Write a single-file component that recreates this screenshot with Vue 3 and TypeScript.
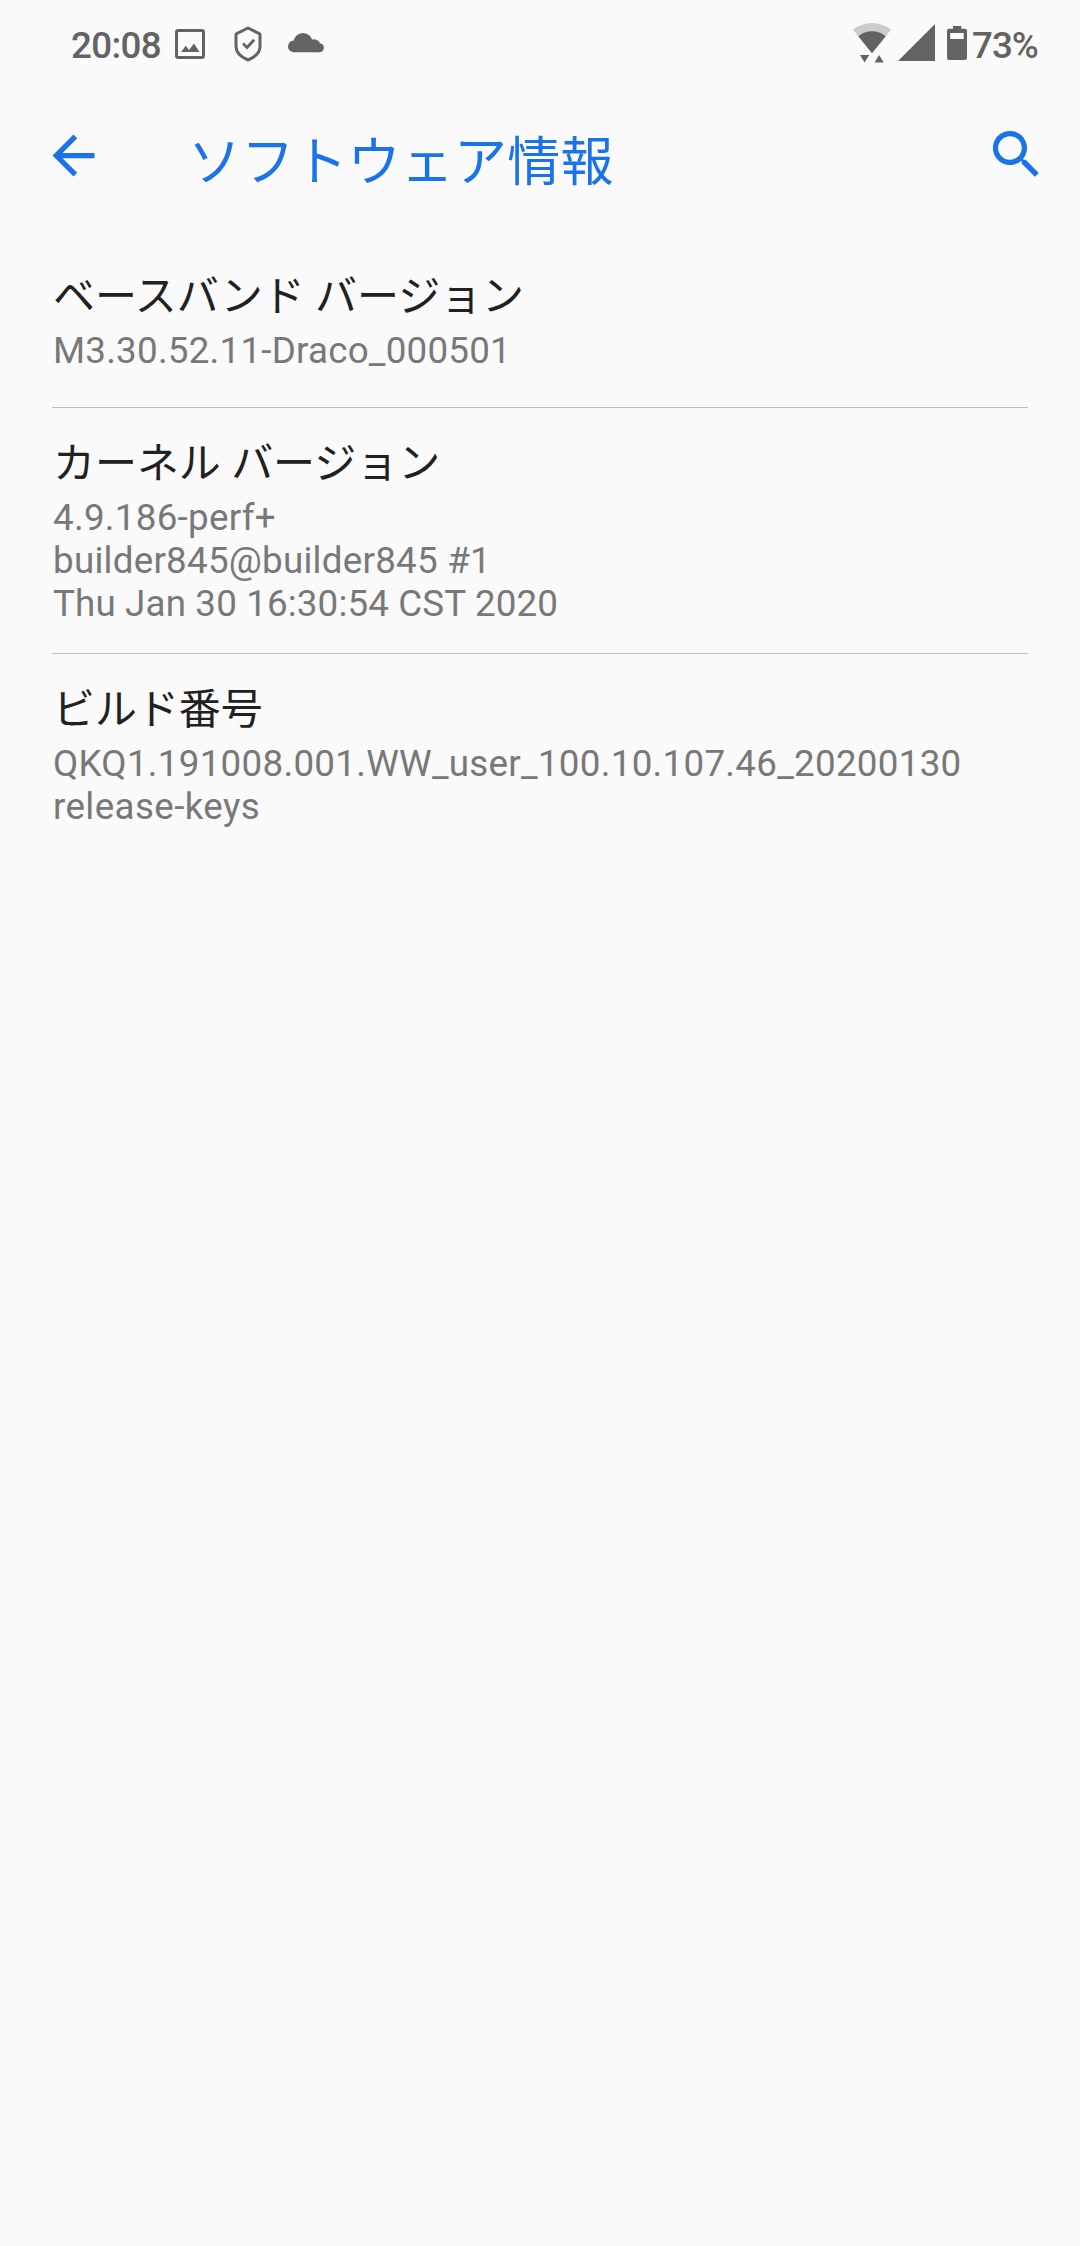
<script setup lang="ts">
interface InfoLine {
  text: string
  tracking: number
}

interface InfoRow {
  title: string
  lines: InfoLine[]
}

const rows: InfoRow[] = [
  {
    title: 'ベースバンド バージョン',
    lines: [{ text: 'M3.30.52.11-Draco_000501', tracking: 0.23 }],
  },
  {
    title: 'カーネル バージョン',
    lines: [
      { text: '4.9.186-perf+', tracking: 0.28 },
      { text: 'builder845@builder845 #1', tracking: 0.24 },
      { text: 'Thu Jan 30 16:30:54 CST 2020', tracking: 0.14 },
    ],
  },
  {
    title: 'ビルド番号',
    lines: [
      { text: 'QKQ1.191008.001.WW_user_100.10.107.46_20200130', tracking: 0.28 },
      { text: 'release-keys', tracking: 0.38 },
    ],
  },
]
</script>

<template>
  <div class="screen">
    <div class="status">
      <span class="clock">20:08</span>
      <svg class="photo" width="30" height="30" viewBox="0 0 30 30">
        <rect x="1.5" y="1.5" width="27" height="27" rx="1.8" fill="none" stroke="currentColor" stroke-width="3" />
        <path fill="currentColor" d="M6 23l4.8-6.2 3.3 4.1 4.9-6.4L24.5 23z" />
      </svg>
      <svg class="shield" width="28" height="36" viewBox="0 0 28 36">
        <path d="M14 2L26 8v12.500q0 8.500-12 13.500Q2 29 2 20.500V8z" fill="none" stroke="currentColor" stroke-width="3" stroke-linejoin="round" />
        <path d="M9 17.500l4 4L20.200 13.700" fill="none" stroke="currentColor" stroke-width="2.800" />
      </svg>
      <svg class="cloud" width="36" height="20" viewBox="0 0 36 20" fill="currentColor">
        <circle cx="15" cy="9.500" r="9.500" />
        <circle cx="5.900" cy="13.400" r="5.900" />
        <circle cx="26" cy="12.800" r="6.500" />
        <circle cx="31.400" cy="14.800" r="4.500" />
        <path d="M5.900 9.500H25l6.400 4v5.800H5.900z" />
      </svg>
      <span class="spacer"></span>
      <svg class="wifi" width="38" height="40" viewBox="0 0 38 40">
        <path fill="#cbcbcb" d="M0 6.600Q8.500 0 19 0T38 6.600L19 30z" />
        <path fill="currentColor" d="M5.300 13.200Q11.500 8.300 19 8.300T32.700 13.200L19 30.300zM7 32h9.200l-4.600 7.500zM21.500 39.500h9.200L26.100 32z" />
      </svg>
      <svg class="signal" width="37" height="37" viewBox="0 0 37 37">
        <path fill="currentColor" d="M37 0v37H0z" />
      </svg>
      <svg class="battery" width="20" height="34" viewBox="0 0 20 34">
        <path fill="currentColor" fill-rule="evenodd" d="M6 0h8.300v2.700H18q2 0 2 2V32q0 2-2 2H2q-2 0-2-2V4.700q0-2 2-2h4zM3.200 7v6h13.500V7z" />
      </svg>
      <span class="percent">73%</span>
    </div>

    <header class="bar">
      <svg class="back" width="63" height="63" viewBox="0 0 24 24">
        <path fill="currentColor" d="M20 11H7.830l5.590-5.590L12 4l-8 8 8 8 1.410-1.410L7.830 13H20v-2z" />
      </svg>
      <h1 class="heading">ソフトウェア情報</h1>
      <svg class="search" width="63" height="63" viewBox="0 0 24 24">
        <path fill="currentColor" d="M15.500 14h-.790l-.280-.270A6.471 6.471 0 0 0 16 9.500 6.500 6.500 0 1 0 9.500 16c1.610 0 3.090-.590 4.230-1.570l.270.280v.790l5 4.990L20.490 19l-4.990-5zm-6 0C7.010 14 5 11.990 5 9.500S7.010 5 9.500 5 14 7.010 14 9.500 11.990 14 9.500 14z" />
      </svg>
    </header>

    <main class="list">
      <section v-for="row in rows" :key="row.title" class="row">
        <h2 class="title">{{ row.title }}</h2>
        <p
          v-for="line in row.lines"
          :key="line.text"
          class="line"
          :style="{ letterSpacing: `${line.tracking}px` }"
        >{{ line.text }}</p>
      </section>
    </main>
  </div>
</template>

<style>
html,
body {
  margin: 0;
  background: #fafafa;
}
</style>

<style scoped>
.screen {
  width: 1080px;
  height: 2246px;
  overflow: hidden;
  background: #fafafa;
  font-family: Roboto, 'Noto Sans CJK JP', sans-serif;
}
.status {
  display: flex;
  align-items: flex-start;
  height: 84px;
  color: #636363;
}
.status svg {
  flex: none;
  display: block;
}
.clock,
.percent {
  margin-top: 24px;
  font-size: 36.750px;
  letter-spacing: -0.650px;
  line-height: 43px;
  font-weight: 500;
  white-space: nowrap;
}
.clock {
  width: 104px;
  padding-left: 71px;
}
.photo {
  margin-top: 29px;
}
.shield {
  margin: 26px 0 0 29px;
}
.cloud {
  margin: 33px 0 0 26px;
}
.spacer {
  flex: 1;
}
.wifi {
  margin-top: 23px;
}
.signal {
  margin: 24px 0 0 7px;
}
.battery {
  margin: 26px 0 0 12px;
}
.percent {
  width: 108px;
  margin-left: 5px;
  letter-spacing: -1px;
}
.bar {
  display: flex;
  align-items: flex-start;
  height: 156px;
  color: #1a73e8;
}
.bar svg {
  flex: none;
  display: block;
}
.back {
  margin: 40px 0 0 42px;
}
.search {
  margin: 39px 32px 0 0;
}
.heading {
  flex: 1;
  margin: 41px 0 0 83px;
  font-size: 53px;
  letter-spacing: 0.200px;
  line-height: 76px;
  font-weight: 400;
}
.list {
  padding: 0 52px;
}
.row {
  padding: 32px 1px 35px;
}
.row + .row {
  padding: 31px 1px 28px;
  border-top: 1px solid #bdbdbd;
}
.title {
  margin: 0 0 8px;
  font-size: 42px;
  letter-spacing: -0.050px;
  line-height: 49px;
  font-weight: 400;
  color: #212121;
}
.line {
  margin: 0;
  font-size: 36.750px;
  line-height: 43px;
  color: #787878;
  white-space: nowrap;
}
</style>
